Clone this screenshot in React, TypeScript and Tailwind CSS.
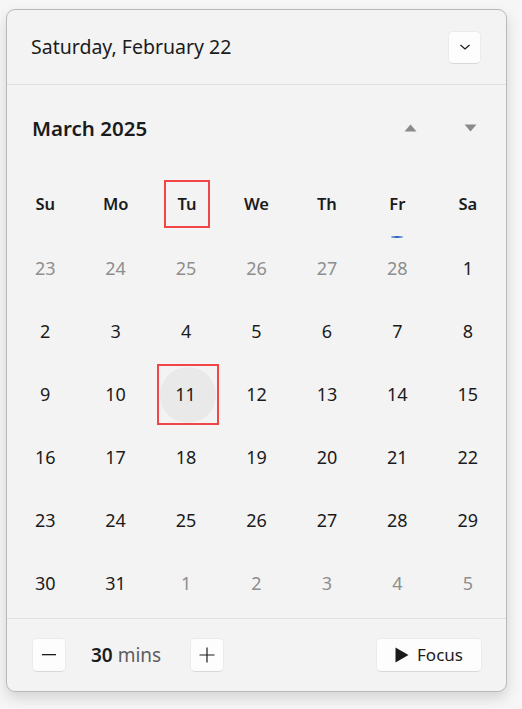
const weeks: { d: number; muted?: boolean }[][] = [
  [{ d: 23, muted: true }, { d: 24, muted: true }, { d: 25, muted: true }, { d: 26, muted: true }, { d: 27, muted: true }, { d: 28, muted: true }, { d: 1 }],
  [{ d: 2 }, { d: 3 }, { d: 4 }, { d: 5 }, { d: 6 }, { d: 7 }, { d: 8 }],
  [{ d: 9 }, { d: 10 }, { d: 11 }, { d: 12 }, { d: 13 }, { d: 14 }, { d: 15 }],
  [{ d: 16 }, { d: 17 }, { d: 18 }, { d: 19 }, { d: 20 }, { d: 21 }, { d: 22 }],
  [{ d: 23 }, { d: 24 }, { d: 25 }, { d: 26 }, { d: 27 }, { d: 28 }, { d: 29 }],
  [{ d: 30 }, { d: 31 }, { d: 1, muted: true }, { d: 2, muted: true }, { d: 3, muted: true }, { d: 4, muted: true }, { d: 5, muted: true }],
]

const dayNames = ['Su', 'Mo', 'Tu', 'We', 'Th', 'Fr', 'Sa']

export default function App() {
  return (
    <div
      className="min-h-[709px] w-[522px] bg-[#f6f6f6] pl-[6px] pt-[9px] text-[#1b1b1b]"
      style={{ fontFamily: '"Noto Sans", "Open Sans", sans-serif' }}
    >
      <div className="flex h-[683px] w-[501px] flex-col overflow-hidden rounded-[9px] border border-[#b9b9b9] bg-[#f3f3f3] shadow-[0_6px_14px_rgba(0,0,0,0.14)]">
        {/* header */}
        <div className="flex h-[75px] shrink-0 items-center justify-between border-b border-[#e0e0e0] pl-[24px] pr-[25px]">
          <span className="text-[19.5px] leading-none">Saturday, February 22</span>
          <button className="flex h-[33px] w-[33px] items-center justify-center rounded-[5px] border border-[#ebebeb] border-b-[#d8d8d8] bg-[#fdfdfd]">
            <svg width="12" height="8" viewBox="0 0 12 8" fill="none">
              <path d="M1.5 2 L6 6 L10.5 2" stroke="#1b1b1b" strokeWidth="1.2" />
            </svg>
          </button>
        </div>

        {/* calendar */}
        <div className="flex flex-1 flex-col px-[3px]">
          <div className="flex h-[86px] items-center justify-between pl-[22px] pr-[26px]">
            <span className="text-[20.5px] font-semibold leading-none">March 2025</span>
            <div className="flex items-center gap-[47px]">
              <svg width="13" height="8" viewBox="0 0 13 8">
                <path d="M6.5 0.5 L12.5 7.5 L0.5 7.5 Z" fill="#8a8a8a" />
              </svg>
              <svg width="13" height="8" viewBox="0 0 13 8">
                <path d="M0.5 0.5 L12.5 0.5 L6.5 7.5 Z" fill="#8a8a8a" />
              </svg>
            </div>
          </div>

          <div className="grid h-[66px] grid-cols-7">
            {dayNames.map((n) => (
              <div key={n} className="relative flex items-center justify-center">
                <span
                  className={
                    n === 'Tu'
                      ? 'ml-[2px] flex h-[48px] w-[46px] items-center justify-center border-2 border-[#f24646] text-[16.5px] font-semibold'
                      : 'text-[16.5px] font-semibold'
                  }
                >
                  {n}
                </span>
                {n === 'Fr' && (
                  <span className="absolute bottom-[-1px] left-1/2 h-[2px] w-[12px] -translate-x-1/2 rounded-full bg-gradient-to-r from-[#9bb8e0] via-[#1f5fbf] to-[#9bb8e0]" />
                )}
              </div>
            ))}
          </div>

          {weeks.map((w, i) => (
            <div key={i} className="grid h-[63px] grid-cols-7">
              {w.map((c, j) => {
                const selected = i === 2 && j === 2
                return (
                  <div key={j} className="flex items-center justify-center">
                    {selected ? (
                      <span className="ml-[3px] flex h-[61px] w-[62px] items-center justify-center border-2 border-[#f24646]">
                        <span className="flex h-[56px] w-[56px] items-center justify-center rounded-full bg-[#e9e9e9] pr-[4px] text-[18px]">
                          11
                        </span>
                      </span>
                    ) : (
                      <span className={c.muted ? 'text-[18px] text-[#8e8e8e]' : 'text-[18px]'}>{c.d}</span>
                    )}
                  </div>
                )
              })}
            </div>
          ))}
        </div>

        {/* footer */}
        <div className="flex h-[73px] shrink-0 items-center justify-between border-t border-[#e0e0e0] pl-[25px] pr-[24px]">
          <div className="flex items-center">
            <button className="flex h-[34px] w-[34px] items-center justify-center rounded-[5px] border border-[#ebebeb] border-b-[#d8d8d8] bg-[#fdfdfd]">
              <svg width="14" height="2" viewBox="0 0 14 2">
                <rect width="14" height="1.3" fill="#1b1b1b" />
              </svg>
            </button>
            <span className="ml-[25px] w-[99px] text-[19px]">
              <span className="font-semibold">30</span> <span className="text-[#5e5e5e]">mins</span>
            </span>
            <button className="flex h-[34px] w-[34px] items-center justify-center rounded-[5px] border border-[#ebebeb] border-b-[#d8d8d8] bg-[#fdfdfd]">
              <svg width="16" height="16" viewBox="0 0 16 16">
                <path d="M8 0.5 V15.5 M0.5 8 H15.5" stroke="#1b1b1b" strokeWidth="1.2" />
              </svg>
            </button>
          </div>
          <button className="flex h-[34px] w-[106px] items-center justify-center gap-[8px] rounded-[5px] border border-[#ebebeb] border-b-[#d8d8d8] bg-[#fdfdfd] text-[17px]">
            <svg width="14" height="16" viewBox="0 0 14 16">
              <path d="M0.5 0.5 L13.5 8 L0.5 15.5 Z" fill="#1b1b1b" />
            </svg>
            <span>Focus</span>
          </button>
        </div>
      </div>
    </div>
  )
}
